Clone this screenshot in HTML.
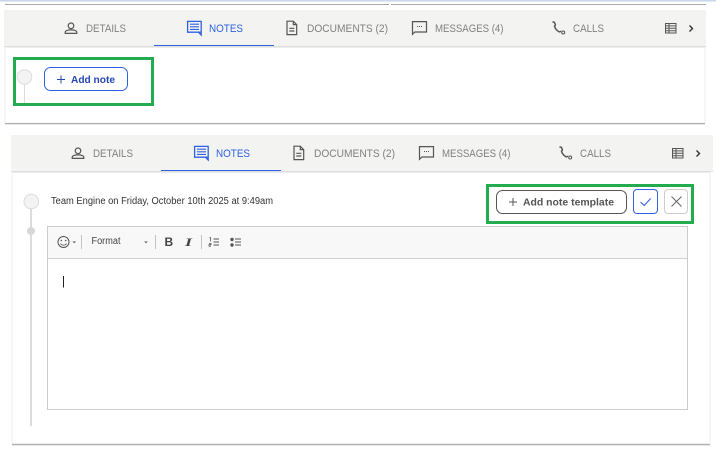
<!DOCTYPE html>
<html>
<head>
<meta charset="utf-8">
<style>
html,body{margin:0;padding:0;background:#fff;width:716px;height:463px;overflow:hidden}
svg{display:block}
text{font-family:"Liberation Sans",Arial,sans-serif}
.tab{font-size:11px;fill:#808080}
.act{font-size:11px;fill:#2f62e0}
</style>
</head>
<body>
<svg width="716" height="463" viewBox="0 0 716 463" xmlns="http://www.w3.org/2000/svg">
<defs>
<g id="tabs">
<rect x="0" y="0" width="702" height="36" fill="#f3f3f2"/>
<rect x="0" y="36" width="702" height="1" fill="#dfdfdf"/>
<rect x="150" y="35" width="120" height="1" fill="#2f62e0"/>
<!-- person -->
<g fill="none" stroke="#555" stroke-width="1.200">
<circle cx="67" cy="15.800" r="2.800"/>
<path d="M61.200 23.400v-1.200c0-1.500 2.900-2.300 5.800-2.300s5.800.8 5.800 2.300v1.200z"/>
</g>
<!-- notes -->
<g fill="none" stroke="#2f62e0" stroke-width="1.300">
<path d="M183.600 11.400h13.600v10.800h-13.600zM197.200 22.200v2.800l-2.800-2.800"/>
<path d="M186 14.200h9M186 16.800h9M186 19.400h9" stroke-width="1.100"/>
</g>
<!-- doc -->
<g fill="none" stroke="#555" stroke-width="1.200">
<path d="M283 11.200h6.300l3.400 3.400v10h-9.700zM289.300 11.200v3.400h3.400"/>
<path d="M285.300 18.300h5.100M285.300 21h5.100"/>
</g>
<!-- message -->
<g fill="none" stroke="#555" stroke-width="1.200">
<path d="M408.500 11.600h14v10.400h-11.600l-2.400 2.300z"/>
</g>
<path d="M413 16.500h1M415 16.500h1M417 16.500h1" stroke="#555" stroke-width="1"/>
<!-- phone -->
<path d="M548.500 12.400c.7-.5 1.500-.5 2 .1l.9 2.300c.1.6-.8 1-.9 1.500.7 2.300 2.600 4.500 4.900 5.600.6 0 1.100-.6 1.700-.5" fill="none" stroke="#555" stroke-width="1.500"/>
<circle cx="559.200" cy="22.500" r="1.500" fill="none" stroke="#555" stroke-width="1"/>
<!-- table -->
<g fill="none" stroke="#555" stroke-width="1">
<rect x="661.500" y="13.500" width="10.500" height="9.500"/>
<path d="M661.500 15.900h10.500M661.500 18.300h10.500M661.500 20.700h10.500M665 13.500v9.500"/>
</g>
<!-- chevron -->
<path d="M685.500 15.500l3 3-3 3" fill="none" stroke="#333" stroke-width="1.400"/>
<text class="tab" x="82" y="22" textLength="40" lengthAdjust="spacingAndGlyphs">DETAILS</text>
<text class="act" x="205" y="22" textLength="34" lengthAdjust="spacingAndGlyphs">NOTES</text>
<text class="tab" x="303" y="22" textLength="81" lengthAdjust="spacingAndGlyphs">DOCUMENTS (2)</text>
<text class="tab" x="431" y="22" textLength="68.500" lengthAdjust="spacingAndGlyphs">MESSAGES (4)</text>
<text class="tab" x="569" y="22" textLength="31" lengthAdjust="spacingAndGlyphs">CALLS</text>
</g>
</defs>

<!-- top strip -->
<rect x="0" y="0" width="716" height="1.500" fill="#c9d5ea"/>
<rect x="5" y="1.500" width="384" height="2.500" fill="#fff"/>
<rect x="391" y="1.500" width="315" height="2.500" fill="#fff"/>
<rect x="5" y="4" width="384" height="1" fill="#a9a9a9"/>
<rect x="391" y="4" width="315" height="1" fill="#a9a9a9"/>

<!-- first panel -->
<use href="#tabs" x="4" y="10"/>
<rect x="5" y="47.500" width="700" height="75.500" fill="#fff" stroke="#ececec" stroke-width="1"/>
<rect x="5" y="123" width="700" height="1" fill="#b0b0b0"/>
<rect x="5" y="124" width="700" height="1" fill="#e8e8e8"/>
<rect x="24" y="84" width="1" height="20" fill="#dcdcdc"/>
<circle cx="24.500" cy="77" r="7.300" fill="#f3f3f3" stroke="#dcdcdc" stroke-width="1"/>
<rect x="14.500" y="58.500" width="138" height="46" fill="none" stroke="#22ac4f" stroke-width="3"/>
<rect x="44.500" y="67.500" width="83" height="23" rx="6" fill="#fff" stroke="#2f62e0" stroke-width="1"/>
<path d="M61 75.500v8M57 79.500h8" stroke="#2347b5" stroke-width="1"/>
<text x="71" y="83" font-size="10" font-weight="bold" fill="#2347b5" textLength="44" lengthAdjust="spacingAndGlyphs">Add note</text>

<!-- second panel -->
<use href="#tabs" x="11" y="135"/>
<rect x="12" y="172.500" width="698" height="271" fill="#fff" stroke="#ececec" stroke-width="1"/>
<rect x="12" y="444" width="698" height="1" fill="#b0b0b0"/>
<rect x="12" y="445" width="698" height="1" fill="#e8e8e8"/>

<rect x="30" y="208" width="2" height="218" fill="#dcdcdc"/>
<circle cx="31.300" cy="201.500" r="7.300" fill="#f3f3f3" stroke="#dcdcdc" stroke-width="1"/>
<circle cx="31" cy="231" r="4" fill="#d8d8d8"/>
<text x="51" y="204" font-size="10" fill="#333" textLength="222" lengthAdjust="spacingAndGlyphs">Team Engine on Friday, October 10th 2025 at 9:49am</text>

<rect x="487.500" y="185.500" width="205" height="37" fill="none" stroke="#22ac4f" stroke-width="3"/>
<rect x="496.500" y="190.500" width="130" height="23" rx="6" fill="#fff" stroke="#555" stroke-width="1"/>
<path d="M513 198v8M509 202h8" stroke="#555" stroke-width="1"/>
<text x="523" y="205.500" font-size="10" font-weight="bold" fill="#555" textLength="91" lengthAdjust="spacingAndGlyphs">Add note template</text>
<rect x="633.500" y="189.500" width="24" height="24" rx="3.500" fill="#fff" stroke="#2f62e0" stroke-width="1"/>
<path d="M640.500 202l3.700 3.500 6.500-7" fill="none" stroke="#2f62e0" stroke-width="1.100"/>
<rect x="664.500" y="189.500" width="23" height="24" rx="3.500" fill="#fff" stroke="#ccc" stroke-width="1"/>
<path d="M671.500 196.500l10 10M681.500 196.500l-10 10" fill="none" stroke="#666" stroke-width="1"/>

<!-- editor -->
<rect x="47.500" y="226.500" width="640" height="183" fill="#fff" stroke="#ccc" stroke-width="1"/>
<rect x="48" y="227" width="639" height="31" fill="#f8f8f8"/>
<rect x="48" y="258" width="639" height="1" fill="#d1d1d1"/>
<g fill="none" stroke="#555" stroke-width="1">
<circle cx="63.500" cy="242" r="5.500"/>
</g>
<circle cx="61.300" cy="240.500" r=".8" fill="#555"/>
<circle cx="65.700" cy="240.500" r=".8" fill="#555"/>
<path d="M60.500 243.500c1 2.200 5 2.200 6 0" fill="none" stroke="#555" stroke-width=".9"/>
<path d="M72.500 241.500h3.500l-1.750 1.800z" fill="#555"/>
<rect x="81" y="235" width="1" height="14" fill="#c4c4c4"/>
<text x="91.500" y="244" font-size="10" fill="#444" textLength="29" lengthAdjust="spacingAndGlyphs">Format</text>
<path d="M144.200 241.500h3.600l-1.800 1.800z" fill="#555"/>
<rect x="155" y="235" width="1" height="14" fill="#c4c4c4"/>
<text x="164.500" y="246" font-size="12" font-weight="bold" fill="#444">B</text>
<text x="185" y="246" font-size="12" font-weight="bold" font-style="italic" fill="#444" style="font-family:'Liberation Serif',serif" textLength="7" lengthAdjust="spacingAndGlyphs">I</text>
<rect x="201" y="235" width="1" height="14" fill="#c4c4c4"/>
<path d="M213.500 239h5.500M213.500 242h5.500M213.500 245h5.500" stroke="#555" stroke-width="1"/>
<path d="M209.500 238l1-.5v4M209 243.500h2v1.200h-2v1.500h2" fill="none" stroke="#555" stroke-width=".8"/>
<circle cx="232" cy="239.500" r="1.700" fill="#555"/>
<circle cx="232" cy="245" r="1.700" fill="#555"/>
<path d="M235 239h6M235 242h6M235 245h6" stroke="#555" stroke-width="1"/>
<rect x="63" y="276" width="1" height="11.500" fill="#222"/>
</svg>
</body>
</html>
